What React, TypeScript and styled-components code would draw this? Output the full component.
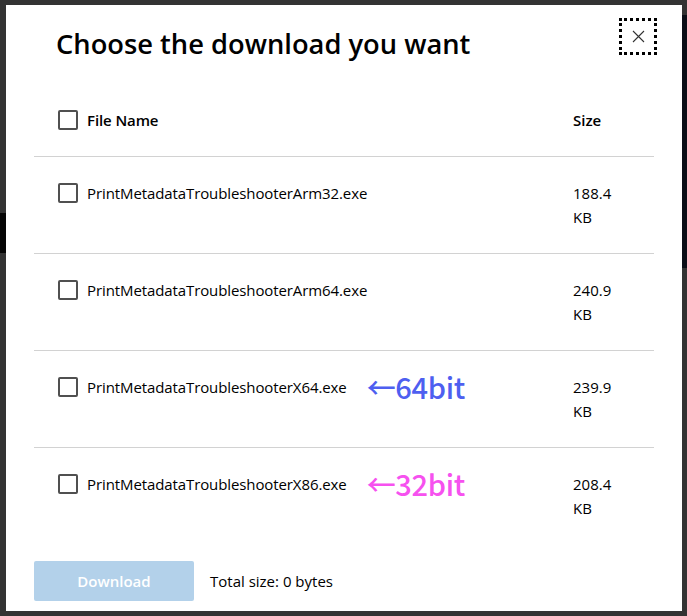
import React from "react";
import styled, { createGlobalStyle } from "styled-components";

const GlobalStyle = createGlobalStyle`
  html, body {
    margin: 0;
    padding: 0;
    background: #333;
    font-family: "Segoe UI", "Open Sans", "Noto Sans", sans-serif;
    color: #000;
  }
`;

const Page = styled.div`
  position: relative;
  width: 687px;
  height: 616px;
  overflow: hidden;
  display: flex;
  background: #333;
`;

const PageLeft = styled.div`
  width: 8px;
  display: flex;
  flex-direction: column;
`;

const PageBand = styled.div<{ $h: number; $bg: string }>`
  height: ${(p) => p.$h}px;
  background: ${(p) => p.$bg};
  flex-shrink: 0;
`;

const PageRight = styled.div`
  flex: 1;
  display: flex;
  flex-direction: column;
`;

const Modal = styled.div`
  position: absolute;
  top: 5px;
  left: 6px;
  width: 676px;
  box-sizing: border-box;
  background: #fff;
  padding: 0 28px 10px;
  display: flex;
  flex-direction: column;
`;

const Header = styled.div`
  display: flex;
  justify-content: space-between;
  align-items: flex-start;
  padding-top: 21px;
`;

const Title = styled.h1`
  margin: 0 0 0 22px;
  font-size: 27.3px;
  line-height: 36px;
  font-weight: 600;
`;

const CloseButton = styled.button`
  width: 38px;
  height: 37px;
  margin: -8px -3px 0 0;
  padding: 0;
  border: 3px dotted #000;
  background: #fff;
  display: flex;
  align-items: center;
  justify-content: center;
  cursor: pointer;
`;

const Table = styled.div`
  margin-top: 46px;
  display: flex;
  flex-direction: column;
`;

const Row = styled.div<{ $head?: boolean }>`
  display: flex;
  align-items: flex-start;
  padding: ${(p) => (p.$head ? "0 24px 24px" : "24px")};
  font-size: 15px;
  line-height: 24px;
  font-weight: ${(p) => (p.$head ? 600 : 400)};
  border-bottom: 1px solid #d2d2d2;

  &:last-child {
    border-bottom: none;
  }
`;

const Box = styled.span`
  width: 20px;
  height: 20px;
  box-sizing: border-box;
  border: 2px solid #505050;
  border-radius: 2px;
  margin-top: 2px;
  flex-shrink: 0;
`;

const NameCell = styled.div`
  flex: 1;
  display: flex;
  align-items: center;
  padding-left: 9px;
  letter-spacing: -0.1px;
`;

const SizeCell = styled.div`
  width: 57px;
`;

const Note = styled.span<{ $color: string }>`
  margin-left: 20px;
  margin-top: -2px;
  font-family: "Noto Sans CJK JP", "Noto Sans", sans-serif;
  font-size: 29px;
  font-weight: 500;
  line-height: 24px;
  letter-spacing: -0.3px;
  color: ${(p) => p.$color};
`;

const Footer = styled.div`
  margin-top: 17px;
  display: flex;
  align-items: center;
  gap: 16px;
`;

const DownloadButton = styled.button`
  width: 160px;
  height: 40px;
  border: none;
  border-radius: 2px;
  background: #b3d1ea;
  color: #fff;
  font-family: inherit;
  font-size: 15px;
  font-weight: 600;
`;

const Total = styled.span`
  font-size: 15px;
`;

const files = [
  { name: "PrintMetadataTroubleshooterArm32.exe", size: "188.4 KB" },
  { name: "PrintMetadataTroubleshooterArm64.exe", size: "240.9 KB" },
  { name: "PrintMetadataTroubleshooterX64.exe", size: "239.9 KB", note: "←64bit", color: "#4e5ff0" },
  { name: "PrintMetadataTroubleshooterX86.exe", size: "208.4 KB", note: "←32bit", color: "#f651ef" },
];

const App = () => {
  return (
    <Page>
      <GlobalStyle />
      <PageLeft>
        <PageBand $h={213} $bg="#333" />
        <PageBand $h={40} $bg="#050505" />
      </PageLeft>
      <PageRight>
        <PageBand $h={15} $bg="#333" />
        <PageBand $h={253} $bg="#0b0e17" />
      </PageRight>
      <Modal>
        <Header>
          <Title>Choose the download you want</Title>
          <CloseButton aria-label="Close">
            <svg width="13" height="13" viewBox="0 0 13 13">
              <path d="M1 1L12 12M12 1L1 12" stroke="#333" strokeWidth="1.1" fill="none" />
            </svg>
          </CloseButton>
        </Header>
        <Table>
          <Row $head>
            <Box />
            <NameCell>File Name</NameCell>
            <SizeCell>Size</SizeCell>
          </Row>
          {files.map((f) => (
            <Row key={f.name}>
              <Box />
              <NameCell>
                {f.name}
                {f.note && <Note $color={f.color!}>{f.note}</Note>}
              </NameCell>
              <SizeCell>{f.size}</SizeCell>
            </Row>
          ))}
        </Table>
        <Footer>
          <DownloadButton disabled>Download</DownloadButton>
          <Total>Total size: 0 bytes</Total>
        </Footer>
      </Modal>
    </Page>
  );
};

export default App;
